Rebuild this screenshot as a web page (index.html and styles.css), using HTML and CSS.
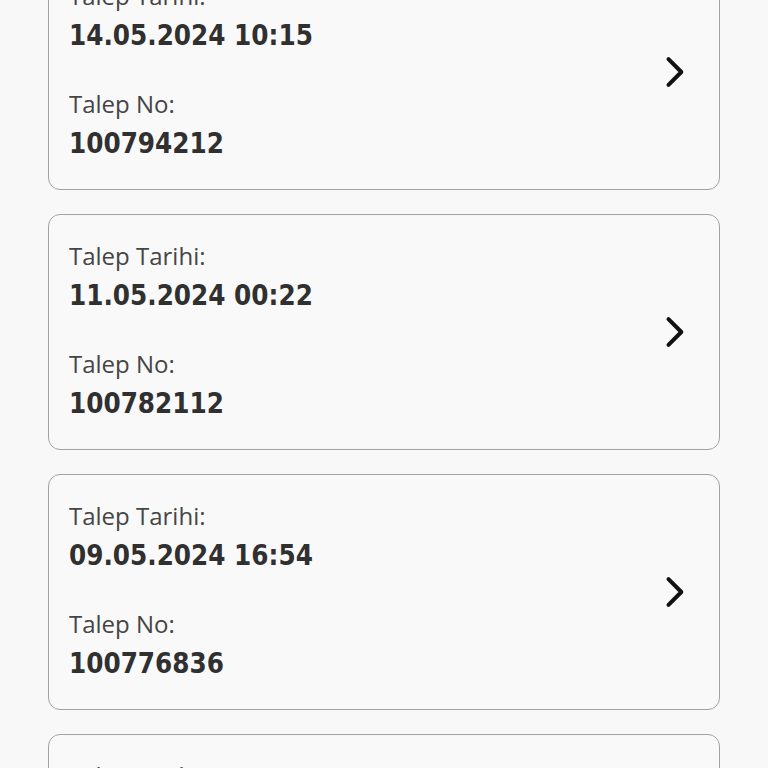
FILE: index.html
```html
<!DOCTYPE html>
<html>
<head>
	<title>Taleplerim</title>
	<link rel="stylesheet" href="styles.css">
</head>
<body>
	<div class="request-list">
		<div class="request-card">
			<div class="request-info">
				<span class="label">Talep Tarihi:</span>
				<span class="value">14.05.2024 10:15</span>
				<span class="label second">Talep No:</span>
				<span class="value">100794212</span>
			</div>
			<svg class="chevron" viewBox="0 0 24 24"><path d="M9 5l7 7-7 7"/></svg>
		</div>
		<div class="request-card">
			<div class="request-info">
				<span class="label">Talep Tarihi:</span>
				<span class="value">11.05.2024 00:22</span>
				<span class="label second">Talep No:</span>
				<span class="value">100782112</span>
			</div>
			<svg class="chevron" viewBox="0 0 24 24"><path d="M9 5l7 7-7 7"/></svg>
		</div>
		<div class="request-card">
			<div class="request-info">
				<span class="label">Talep Tarihi:</span>
				<span class="value">09.05.2024 16:54</span>
				<span class="label second">Talep No:</span>
				<span class="value">100776836</span>
			</div>
			<svg class="chevron" viewBox="0 0 24 24"><path d="M9 5l7 7-7 7"/></svg>
		</div>
		<div class="request-card">
			<div class="request-info">
				<span class="label">Talep Tarihi:</span>
				<span class="value">07.05.2024 14:08</span>
				<span class="label second">Talep No:</span>
				<span class="value">100769503</span>
			</div>
			<svg class="chevron" viewBox="0 0 24 24"><path d="M9 5l7 7-7 7"/></svg>
		</div>
	</div>
</body>
</html>
```

FILE: styles.css
```css
body {
	margin: 0;
	background-color: #f8f8f9;
	font-family: "Open Sans", "Noto Sans", sans-serif;
	overflow: hidden;
}

.request-list {
	display: flex;
	flex-direction: column;
	gap: 24px;
	padding: 0 48px;
	margin-top: -46px;
}

.request-card {
	display: flex;
	align-items: center;
	justify-content: space-between;
	height: 236px;
	box-sizing: border-box;
	padding: 0 23px 4px 20px;
	border: 1.5px solid #a3a3a6;
	border-radius: 12px;
	background-color: #f9f9f9;
}

.request-info {
	display: flex;
	flex-direction: column;
}

.label {
	font-size: 24px;
	line-height: 30px;
	color: #454545;
}

.label.second {
	margin-top: 38px;
}

.value {
	margin-top: 8px;
	font-family: "DejaVu Sans Condensed", "DejaVu Sans", sans-serif;
	font-stretch: condensed;
	font-weight: bold;
	font-size: 27.5px;
	line-height: 32px;
	color: #303030;
}

.chevron {
	width: 44px;
	height: 44px;
	margin-top: 4px;
	fill: none;
	stroke: #111111;
	stroke-width: 2.2;
	stroke-linecap: round;
	stroke-linejoin: round;
}
```
